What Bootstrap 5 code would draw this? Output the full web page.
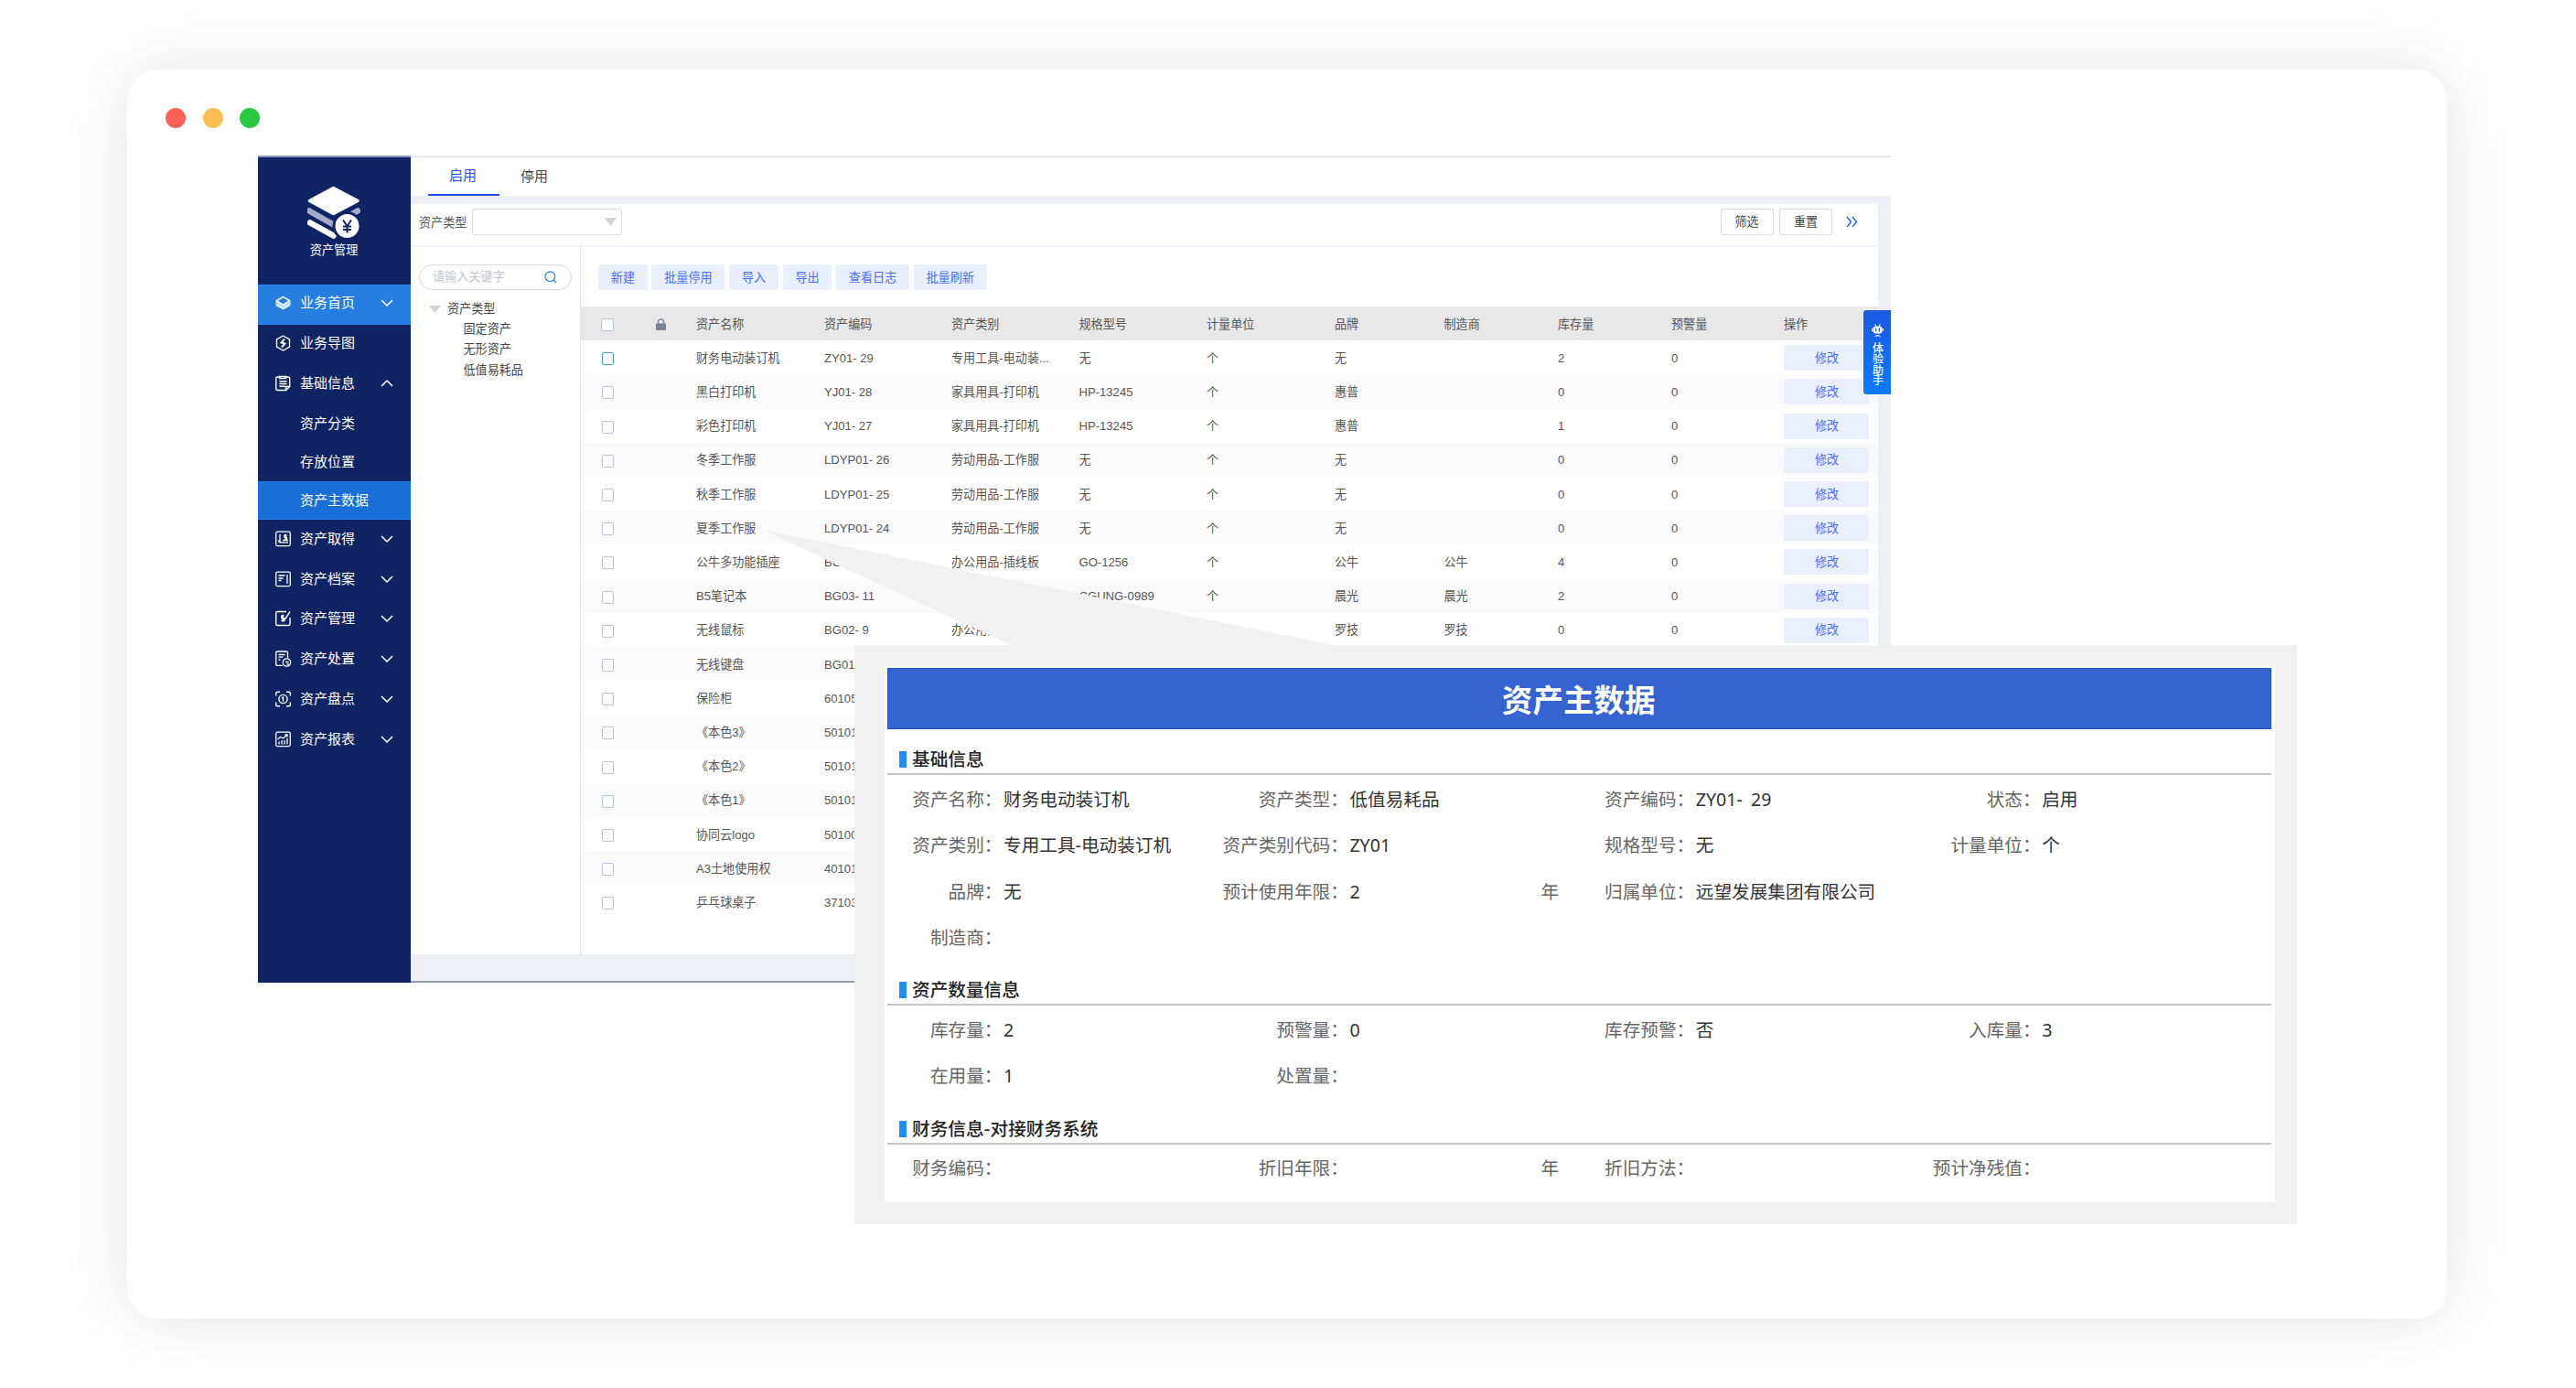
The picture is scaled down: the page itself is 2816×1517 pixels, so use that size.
<!DOCTYPE html>
<html lang="zh-CN">
<head>
<meta charset="utf-8">
<title>资产管理</title>
<link rel="stylesheet" href="https://cdn.jsdelivr.net/npm/bootstrap@5.3.0/dist/css/bootstrap.min.css">
<style>
body{background:#fff;font-family:"Liberation Sans","Noto Sans CJK SC",sans-serif;font-size:13.1px;line-height:1.2;color:#555;overflow:hidden}
svg{display:block;flex:none}
.stage{width:2816px;height:1517px;padding:76px 141px 76px 139px}
.win{height:1365px;border-radius:34px;background:#fff;box-shadow:0 0 76px rgba(0,0,0,.115)}
.win-head{height:94px;padding:42px 0 0 42px}
.dot{width:22px;height:22px;border-radius:50%}
.app{width:1785px;height:904px;margin-left:143px}
.side{width:167px;background:#102464;border-top:2px solid #8d96b6;color:#fff;font-size:15px;flex:none}
.logo{height:139px;padding:31px 1px 0 0;font-size:13.2px}
.logo span{margin-top:4px}
.item{height:43.8px;padding:0 19px 3px 18px}
.item .tx{margin-left:9px}
.sub{height:42px;padding-left:46px}
.on1{background:#257ee0;border-top:1px solid #1d8bf5;border-bottom:1px solid #1d8bf5}
.on2{background:#1a6fd6;border-top:1px solid #1f7eea;border-bottom:1px solid #1f7eea}
.main{width:1618px;background:#eeeff5}
.tabbar{height:43px;border-top:1px solid #e2e3e6;background:#fff;padding-left:18.5px;font-size:15px;color:#444;margin-top:1px}
.tabi{width:78px;height:42px;padding:1px 1px 0 0;border-bottom:2.5px solid transparent}
.tabi.act{color:#1e50ff;border-color:#1e50ff;padding-top:0}
.panel{width:1604px;margin-top:9px;height:820px;background:#fff;border-radius:4px 4px 0 0}
.filter{height:47px;padding:5px 0 0 9px;border-bottom:2px solid #f0f5fd}
.sel{width:164px;height:29px;border:1.5px solid #dcdcdc;border-radius:3px;margin-left:6px;padding-right:4px}
.btn-o{width:58px;height:29px;border:1.5px solid #dcdcdc;border-radius:2px;color:#444;padding-top:1px}
.tree{width:186px;border-right:1.5px solid #e0e2e6;padding:19px 9px 0 9px;color:#444}
.search{width:167px;height:28px;border:1.5px solid #dadada;border-radius:14px;padding:0 15px 0 14px;color:#c3c6cc}
.node{height:22.3px}
.tools{height:65px;padding:19px 0 0 19px;gap:4.7px}
.btn-s{height:28px;background:#eaeffe;color:#4a6cff;border-radius:2px;padding:1px 13.8px 0}
.grid{table-layout:fixed;width:1418px;border-collapse:collapse;color:#555}
.grid td,.grid th{padding:2px 0 0;height:37.2px;font-weight:400;vertical-align:middle;white-space:nowrap}
.grid thead{background:#e8e8e8}
.grid tbody tr:nth-child(even){background:#fafafa}
.cb{display:block;width:13.5px;height:14px;border:1.5px solid #b4c4da;border-radius:2px;background:#fff;margin:1px 0 0 22.5px}
thead .cb{margin-left:22px}
.cb.hot{border-color:#409eff}
.ed{width:93px;height:28px;background:#eaeffe;color:#4a6cff;border-radius:2px;display:flex;align-items:center;justify-content:center;margin-bottom:1px;padding:1px 0 0 1px}
.foot-line{height:2px;background:#949ca6}
.helper{left:1897px;top:262px;width:31px;height:94px;background:linear-gradient(#1c58e2,#0a7cff);border:1px solid #fff;border-right:0;border-radius:4px 0 0 4px;color:#fff;font-size:12px;font-weight:500;line-height:11.8px;padding-top:15px}
.helper .v{width:12px;margin:8px 0 0 2px}
.beak{left:694px;top:503px}
.pop{left:795px;top:629px;width:1577px;height:633px;background:#f1f1f1;padding:23px 24px 24px 33px}
.sheet{height:586px;background:#fff;padding:2px 4px 0 2.5px;font-family:"Noto Sans","Noto Sans CJK SC",sans-serif;font-size:19.65px;color:#666}
.ttl{height:67px;background:#3563cf;border:1px solid #2354cc;color:#fff;font-size:33.6px;font-weight:700;font-family:"Noto Sans CJK SC",sans-serif;padding:2px 1px 0 0}
.sec{height:50.4px;border-bottom:2.5px solid #c4c4c4;padding:0 0 5px 13.5px;color:#222;font-weight:500;font-family:"Noto Sans CJK SC",sans-serif}
.bar{width:7.5px;height:18px;background:#1f8dff;margin:0 6.5px 1px 0}
.sec span{line-height:22px}
.line{height:50.4px;padding-top:2px}
.f{width:25%}
.f b{font-weight:400;width:126px;margin-right:1.5px;flex:none;display:flex;justify-content:flex-end;white-space:nowrap}
.f span{color:#333;word-spacing:4px;white-space:nowrap}
.f i{font-style:normal;margin:0 22px 0 auto}
</style>
<script src="https://cdn.jsdelivr.net/npm/bootstrap@5.3.0/dist/js/bootstrap.bundle.min.js"></script>
</head>
<body>
<svg width="0" height="0" class="position-absolute"><defs>
<symbol id="dn" viewBox="0 0 14 8"><path d="M1 1l6 6 6-6" fill="none" stroke="#fff" stroke-width="1.5"/></symbol>
</defs></svg>
<div class="stage"><div class="win position-relative">
<div class="win-head d-flex">
<div class="dot" style="background:#ff5f57"></div><div class="dot" style="background:#ffbd55;margin-left:19px"></div><div class="dot" style="background:#28c840;margin-left:18px"></div>
</div>
<div class="app d-flex">
<nav class="side d-flex flex-column">
<div class="logo d-flex flex-column align-items-center">
<svg width="58" height="59" viewBox="0 0 58 59"><path d="M2 27.500L28.500 42.500L55 27.500" fill="none" stroke="#a3abc8" stroke-width="6.500" stroke-linecap="round" stroke-linejoin="round"/><path d="M3 40.500L28.500 54.500" stroke="#fff" stroke-width="6.500" stroke-linecap="round"/><path d="M28.500 2L56 16.500L28.500 31L1.500 16.500Z" fill="#fff" stroke="#102464" stroke-width="6" stroke-linejoin="round"/><path d="M28.500 2.500L55 16.500L28.500 30.500L2.500 16.500Z" fill="#fff" stroke="#fff" stroke-width="3.500" stroke-linejoin="round"/><circle cx="43.500" cy="44" r="14.500" fill="#fff" stroke="#102464" stroke-width="3"/><path d="M39 37.500l4.500 6.500 4.500-6.500M43.500 44v7.500M39 44.500h9M39 48h9" fill="none" stroke="#102464" stroke-width="2"/></svg>
<span>资产管理</span></div>
<div class="item on1 d-flex align-items-center"><svg width="19" height="18" viewBox="0 0 19 18"><path d="M9.500 1.500L17.500 6v6l-8 4.500-8-4.500V6z" fill="#dcecff"/><path d="M9.500 3.500L15 6.700 9.500 10 4 6.700z" fill="#257ee0"/><path d="M1.500 8.500l8 4.500 8-4.500" fill="none" stroke="#8fc0f5" stroke-width=".8"/></svg><span class="tx">业务首页</span><svg class="ms-auto" width="14" height="8"><use href="#dn"/></svg></div>
<div class="item d-flex align-items-center"><svg width="19" height="18" viewBox="0 0 19 18" fill="none" stroke="#fff" stroke-width="1.400"><path d="M9.500 1L16.500 5v8l-7 4-7-4V5z"/><path d="M11 4.500L7.500 8.500l4 1L8 13.500" stroke-width="1.900"/></svg><span class="tx">业务导图</span></div>
<div class="item d-flex align-items-center"><svg width="19" height="18" viewBox="0 0 19 18" fill="none" stroke="#fff" stroke-width="1.400"><path d="M5 2H3.500Q1.700 2 1.700 4v10.500q0 2 2 2h9l4-4V4q0-2-2-2H13M5.500 1.500h7v2h-7zM5.500 6.700h8M5.500 9.500h8M5.500 12.300h6M12.500 16v-3.500h4"/></svg><span class="tx">基础信息</span><svg class="ms-auto" width="14" height="8" viewBox="0 0 14 8"><path d="M1 7l6-6 6 6" fill="none" stroke="#fff" stroke-width="1.500"/></svg></div>
<div class="sub d-flex align-items-center">资产分类</div>
<div class="sub d-flex align-items-center">存放位置</div>
<div class="sub on2 d-flex align-items-center">资产主数据</div>
<div class="item d-flex align-items-center"><svg width="19" height="18" viewBox="0 0 19 18" fill="none" stroke="#fff" stroke-width="1.300"><rect x="1.700" y="1.200" width="15.600" height="15.400" rx="1.500"/><path d="M6 4v8.500M4 10.800l2 2h9M13.500 5h-2.500v2.300h2.500v2.300h-3M12.200 3.800v7M9 10.600h6"/></svg><span class="tx">资产取得</span><svg class="ms-auto" width="14" height="8"><use href="#dn"/></svg></div>
<div class="item d-flex align-items-center"><svg width="19" height="18" viewBox="0 0 19 18" fill="none" stroke="#fff" stroke-width="1.300"><rect x="1.700" y="1.200" width="15.600" height="15.400" rx="1.500"/><path d="M4.500 5h7M4.500 8h5M4.500 10.500h3M14 4v10" /></svg><span class="tx">资产档案</span><svg class="ms-auto" width="14" height="8"><use href="#dn"/></svg></div>
<div class="item d-flex align-items-center"><svg width="19" height="18" viewBox="0 0 19 18" fill="none" stroke="#fff" stroke-width="1.400"><path d="M13 1.500H3.200q-1.500 0-1.500 1.500v12q0 1.500 1.500 1.500h12.300q1.500 0 1.500-1.500V8M17 1.500L11.500 10l-1.500-1.500"/><path d="M10.500 6H8v2.700h2.800v2.800H7.500M9.200 4.800v8"/></svg><span class="tx">资产管理</span><svg class="ms-auto" width="14" height="8"><use href="#dn"/></svg></div>
<div class="item d-flex align-items-center"><svg width="19" height="18" viewBox="0 0 19 18" fill="none" stroke="#fff" stroke-width="1.300"><path d="M9 16.300H3q-1.300 0-1.300-1.300V2.300Q1.700 1 3 1h10q1.500 0 1.500 1.500V8M4.500 4.500h7M4.500 7.200h5M4.500 10h2"/><circle cx="13.500" cy="13" r="4.200"/><path d="M12 12.500h3.500M13.500 15h2.500"/></svg><span class="tx">资产处置</span><svg class="ms-auto" width="14" height="8"><use href="#dn"/></svg></div>
<div class="item d-flex align-items-center"><svg width="19" height="18" viewBox="0 0 19 18" fill="none" stroke="#fff" stroke-width="1.400"><path d="M6 1.200H3.500Q1.700 1.200 1.700 3v2.500M13 1.200h2.500q1.800 0 1.800 1.800v2.500M6 16.800H3.500q-1.800 0-1.800-1.800v-2.500M13 16.800h2.500q1.800 0 1.800-1.800v-2.500"/><circle cx="9.500" cy="9" r="4.600"/><path d="M9.500 6.300v5.400M8 8l1.500-1"/></svg><span class="tx">资产盘点</span><svg class="ms-auto" width="14" height="8"><use href="#dn"/></svg></div>
<div class="item d-flex align-items-center"><svg width="19" height="18" viewBox="0 0 19 18" fill="none" stroke="#fff" stroke-width="1.300"><rect x="1.700" y="1.200" width="15.600" height="15.400" rx="1.500"/><path d="M3.500 9l3-2.500 3 1.500 4.500-4M11.500 4H14v2.500M5 14.500v-3M8 14.500V10M11 14.500V10M14 14.500V8"/></svg><span class="tx">资产报表</span><svg class="ms-auto" width="14" height="8"><use href="#dn"/></svg></div>
</nav>
<main class="main d-flex flex-column">
<div class="tabbar d-flex"><div class="tabi act d-flex align-items-center justify-content-center">启用</div><div class="tabi d-flex align-items-center justify-content-center">停用</div></div>
<div class="panel d-flex flex-column">
<div class="filter d-flex"><span class="align-self-start pt-1 mt-1">资产类型</span><div class="sel d-flex align-items-center justify-content-end"><svg width="14" height="9"><path d="M0 0h13L6.500 9z" fill="#d3d3d3"/></svg></div>
<div class="ms-auto d-flex" style="margin-right:22px"><div class="btn-o d-flex align-items-center justify-content-center">筛选</div><div class="btn-o d-flex align-items-center justify-content-center" style="margin-left:6.500px">重置</div><svg style="margin:8px 0 0 15px" width="13" height="13" viewBox="0 0 13 13"><path d="M1 1l4.500 5.500L1 12M7 1l4.500 5.500L7 12" fill="none" stroke="#1a66ff" stroke-width="1.500"/></svg></div></div>
<div class="d-flex flex-fill">
<div class="tree"><div class="search d-flex align-items-center"><span>请输入关键字</span><svg class="ms-auto" width="14" height="14" viewBox="0 0 14 14"><circle cx="6.300" cy="6.300" r="5.300" fill="none" stroke="#3f86f0" stroke-width="1.300"/><path d="M10 10l3 3" stroke="#3f86f0" stroke-width="1.400"/></svg></div>
<div style="padding-top:9.500px">
<div class="node d-flex align-items-center"><svg style="margin:0 7px 0 11px" width="13" height="8"><path d="M0 0h13L6.500 8z" fill="#d3d3d3"/></svg>资产类型</div>
<div class="node d-flex align-items-center" style="padding-left:48.500px">固定资产</div><div class="node d-flex align-items-center" style="padding-left:48.500px">无形资产</div><div class="node d-flex align-items-center" style="padding-left:48.500px">低值易耗品</div></div></div>
<div>
<div class="tools d-flex"><div class="btn-s d-flex align-items-center">新建</div><div class="btn-s d-flex align-items-center">批量停用</div><div class="btn-s d-flex align-items-center">导入</div><div class="btn-s d-flex align-items-center">导出</div><div class="btn-s d-flex align-items-center">查看日志</div><div class="btn-s d-flex align-items-center">批量刷新</div></div>
<table class="grid">
<colgroup><col style="width:62px"><col style="width:64px"><col style="width:140px"><col style="width:139px"><col style="width:139.500px"><col style="width:139.500px"><col style="width:140px"><col style="width:119.500px"><col style="width:124.500px"><col style="width:124px"><col style="width:123px"><col style="width:103px"></colgroup>
<thead><tr><th><div class="cb"></div></th><th><svg style="margin-left:20px" width="11" height="13" viewBox="0 0 11 13"><rect y="5.500" width="11" height="7.500" rx="1" fill="#74859b"/><path d="M2.500 6V3.800a3 3 0 0 1 6 0V6" fill="none" stroke="#74859b" stroke-width="1.300"/></svg></th><th>资产名称</th><th>资产编码</th><th>资产类别</th><th>规格型号</th><th>计量单位</th><th>品牌</th><th>制造商</th><th>库存量</th><th>预警量</th><th>操作</th></tr></thead>
<tbody>
<tr><td><div class="cb hot"></div></td><td></td><td>财务电动装订机</td><td>ZY01- 29</td><td>专用工具-电动装...</td><td>无</td><td>个</td><td>无</td><td></td><td>2</td><td>0</td><td><div class="ed">修改</div></td></tr>
<tr><td><div class="cb"></div></td><td></td><td>黑白打印机</td><td>YJ01- 28</td><td>家具用具-打印机</td><td>HP-13245</td><td>个</td><td>惠普</td><td></td><td>0</td><td>0</td><td><div class="ed">修改</div></td></tr>
<tr><td><div class="cb"></div></td><td></td><td>彩色打印机</td><td>YJ01- 27</td><td>家具用具-打印机</td><td>HP-13245</td><td>个</td><td>惠普</td><td></td><td>1</td><td>0</td><td><div class="ed">修改</div></td></tr>
<tr><td><div class="cb"></div></td><td></td><td>冬季工作服</td><td>LDYP01- 26</td><td>劳动用品-工作服</td><td>无</td><td>个</td><td>无</td><td></td><td>0</td><td>0</td><td><div class="ed">修改</div></td></tr>
<tr><td><div class="cb"></div></td><td></td><td>秋季工作服</td><td>LDYP01- 25</td><td>劳动用品-工作服</td><td>无</td><td>个</td><td>无</td><td></td><td>0</td><td>0</td><td><div class="ed">修改</div></td></tr>
<tr><td><div class="cb"></div></td><td></td><td>夏季工作服</td><td>LDYP01- 24</td><td>劳动用品-工作服</td><td>无</td><td>个</td><td>无</td><td></td><td>0</td><td>0</td><td><div class="ed">修改</div></td></tr>
<tr><td><div class="cb"></div></td><td></td><td>公牛多功能插座</td><td>BG</td><td>办公用品-插线板</td><td>GO-1256</td><td>个</td><td>公牛</td><td>公牛</td><td>4</td><td>0</td><td><div class="ed">修改</div></td></tr>
<tr><td><div class="cb"></div></td><td></td><td>B5笔记本</td><td>BG03- 11</td><td></td><td>CGUNG-0989</td><td>个</td><td>晨光</td><td>晨光</td><td>2</td><td>0</td><td><div class="ed">修改</div></td></tr>
<tr><td><div class="cb"></div></td><td></td><td>无线鼠标</td><td>BG02- 9</td><td>办公用品</td><td></td><td></td><td>罗技</td><td>罗技</td><td>0</td><td>0</td><td><div class="ed">修改</div></td></tr>
<tr><td><div class="cb"></div></td><td></td><td>无线键盘</td><td>BG01</td><td></td><td></td><td></td><td></td><td></td><td></td><td></td><td></td></tr>
<tr><td><div class="cb"></div></td><td></td><td>保险柜</td><td>60105</td><td></td><td></td><td></td><td></td><td></td><td></td><td></td><td></td></tr>
<tr><td><div class="cb"></div></td><td></td><td>《本色3》</td><td>50101</td><td></td><td></td><td></td><td></td><td></td><td></td><td></td><td></td></tr>
<tr><td><div class="cb"></div></td><td></td><td>《本色2》</td><td>50101</td><td></td><td></td><td></td><td></td><td></td><td></td><td></td><td></td></tr>
<tr><td><div class="cb"></div></td><td></td><td>《本色1》</td><td>50101</td><td></td><td></td><td></td><td></td><td></td><td></td><td></td><td></td></tr>
<tr><td><div class="cb"></div></td><td></td><td>协同云logo</td><td>50100</td><td></td><td></td><td></td><td></td><td></td><td></td><td></td><td></td></tr>
<tr><td><div class="cb"></div></td><td></td><td>A3土地使用权</td><td>40101</td><td></td><td></td><td></td><td></td><td></td><td></td><td></td><td></td></tr>
<tr><td><div class="cb"></div></td><td></td><td>乒乓球桌子</td><td>37103</td><td></td><td></td><td></td><td></td><td></td><td></td><td></td><td></td></tr>
</tbody></table>
</div></div></div>
<div class="foot-line mt-auto"></div>
</main>
</div>
<div class="helper position-absolute d-flex flex-column align-items-center"><svg width="13" height="14" viewBox="0 0 13 14"><path d="M3.500 0l1.500 2.500M9.500 0L8 2.500" stroke="#fff" stroke-width="1"/><rect x="1.500" y="2.500" width="10" height="8" rx="3" fill="#fff"/><path d="M.6 5v3M12.400 5v3" stroke="#fff" stroke-width="1.200"/><path d="M4.700 4.500v4M8.300 4.500v4" stroke="#1a60ea" stroke-width="1.300"/><path d="M2.500 13.500q4-3 8 0z" fill="#fff"/></svg><div class="v">体验助手</div></div>
<svg class="beak position-absolute" width="630" height="127"><path d="M0 0L628 126.500H273z" fill="#f1f1f1"/></svg>
<section class="pop position-absolute"><div class="sheet">
<div class="ttl d-flex align-items-center justify-content-center">资产主数据</div>
<div class="sec d-flex align-items-end"><div class="bar"></div><span>基础信息</span></div>
<div class="line d-flex align-items-center"><div class="f d-flex"><b>资产名称：</b><span>财务电动装订机</span></div><div class="f d-flex"><b>资产类型：</b><span>低值易耗品</span></div><div class="f d-flex"><b>资产编码：</b><span>ZY01- 29</span></div><div class="f d-flex"><b>状态：</b><span>启用</span></div></div>
<div class="line d-flex align-items-center"><div class="f d-flex"><b>资产类别：</b><span>专用工具-电动装订机</span></div><div class="f d-flex"><b>资产类别代码：</b><span>ZY01</span></div><div class="f d-flex"><b>规格型号：</b><span>无</span></div><div class="f d-flex"><b>计量单位：</b><span>个</span></div></div>
<div class="line d-flex align-items-center"><div class="f d-flex"><b>品牌：</b><span>无</span></div><div class="f d-flex"><b>预计使用年限：</b><span>2</span><i>年</i></div><div class="f d-flex"><b>归属单位：</b><span>远望发展集团有限公司</span></div></div>
<div class="line d-flex align-items-center"><div class="f d-flex"><b>制造商：</b></div></div>
<div class="sec d-flex align-items-end"><div class="bar"></div><span>资产数量信息</span></div>
<div class="line d-flex align-items-center"><div class="f d-flex"><b>库存量：</b><span>2</span></div><div class="f d-flex"><b>预警量：</b><span>0</span></div><div class="f d-flex"><b>库存预警：</b><span>否</span></div><div class="f d-flex"><b>入库量：</b><span>3</span></div></div>
<div class="line d-flex align-items-center"><div class="f d-flex"><b>在用量：</b><span>1</span></div><div class="f d-flex"><b>处置量：</b></div></div>
<div class="sec d-flex align-items-end"><div class="bar"></div><span>财务信息-对接财务系统</span></div>
<div class="line d-flex align-items-center"><div class="f d-flex"><b>财务编码：</b></div><div class="f d-flex"><b>折旧年限：</b><i>年</i></div><div class="f d-flex"><b>折旧方法：</b></div><div class="f d-flex"><b>预计净残值：</b></div></div>
</div></section>
</div></div>
</body>
</html>
